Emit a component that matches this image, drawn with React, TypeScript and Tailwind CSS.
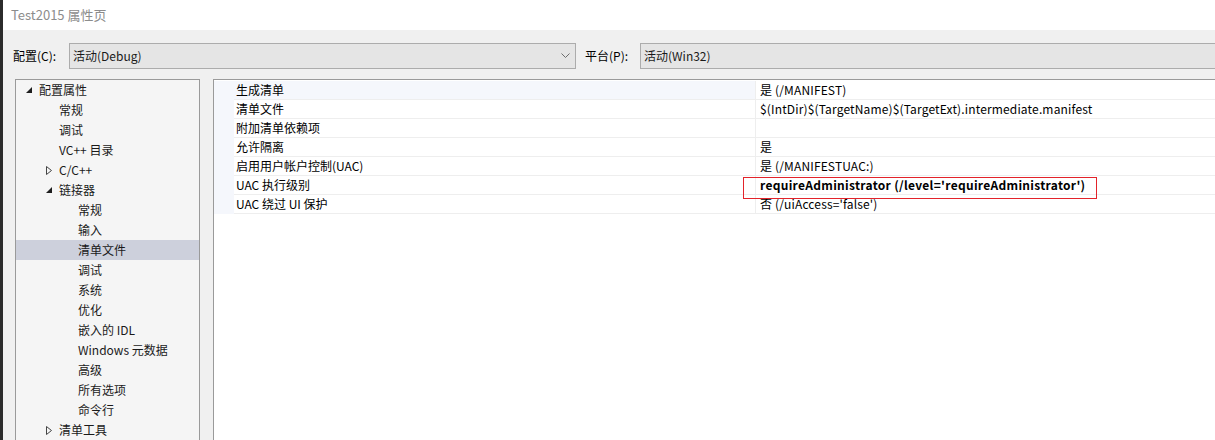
import React from 'react'

const font = { fontFamily: '"Noto Sans CJK SC", "Microsoft YaHei", sans-serif' }

type Node = { label: string; level: number; toggle?: 'open' | 'closed'; selected?: boolean }

const tree: Node[] = [
  { label: '配置属性', level: 0, toggle: 'open' },
  { label: '常规', level: 1 },
  { label: '调试', level: 1 },
  { label: 'VC++ 目录', level: 1 },
  { label: 'C/C++', level: 1, toggle: 'closed' },
  { label: '链接器', level: 1, toggle: 'open' },
  { label: '常规', level: 2 },
  { label: '输入', level: 2 },
  { label: '清单文件', level: 2, selected: true },
  { label: '调试', level: 2 },
  { label: '系统', level: 2 },
  { label: '优化', level: 2 },
  { label: '嵌入的 IDL', level: 2 },
  { label: 'Windows 元数据', level: 2 },
  { label: '高级', level: 2 },
  { label: '所有选项', level: 2 },
  { label: '命令行', level: 2 },
  { label: '清单工具', level: 1, toggle: 'closed' },
]

const props = [
  { name: '生成清单', value: '是 (/MANIFEST)' },
  { name: '清单文件', value: '$(IntDir)$(TargetName)$(TargetExt).intermediate.manifest' },
  { name: '附加清单依赖项', value: '' },
  { name: '允许隔离', value: '是' },
  { name: '启用用户帐户控制(UAC)', value: '是 (/MANIFESTUAC:)' },
  { name: 'UAC 执行级别', value: "requireAdministrator (/level='requireAdministrator')", bold: true },
  { name: 'UAC 绕过 UI 保护', value: "否 (/uiAccess='false')" },
]

function Toggle({ kind }: { kind: 'open' | 'closed' }) {
  if (kind === 'open') {
    return (
      <svg width="7" height="7" viewBox="0 0 7 7" className="shrink-0">
        <polygon points="6,0 6,6 0,6" fill="#1e1e1e" />
      </svg>
    )
  }
  return (
    <svg width="6" height="9" viewBox="0 0 6 9" className="shrink-0">
      <polygon points="0.5,0.5 5.5,4.5 0.5,8.5" fill="none" stroke="#444" strokeWidth="1" />
    </svg>
  )
}

function Dropdown({ text, chevron, className }: { text: string; chevron?: boolean; className: string }) {
  return (
    <div className={`h-[26px] border border-[#acacac] bg-[#e5e5e5] flex items-center pl-[3px] pr-[5px] ${className}`}>
      <span className="flex-1 text-[12px] text-[#1a1a1a]">{text}</span>
      {chevron && (
        <svg width="9" height="6" viewBox="0 0 9 6">
          <polyline points="0.5,0.5 4.5,4.5 8.5,0.5" fill="none" stroke="#6d6d6d" strokeWidth="1" />
        </svg>
      )}
    </div>
  )
}

export default function App() {
  return (
    <div className="w-[1215px] h-[440px] flex overflow-hidden" style={font}>
      <div className="w-[3px] bg-[#2b2b2b]" />
      <div className="flex-1 flex flex-col bg-[#f0f0f0] min-w-0">
        <div className="h-[30px] bg-white flex items-center pl-[8px] text-[13px] text-[#8c8c8c]">
          Test2015 属性页
        </div>

        <div className="mt-[13px] flex items-center">
          <span className="w-[66px] pl-[10px] text-[12px] text-black">配置(C):</span>
          <Dropdown text="活动(Debug)" chevron className="w-[507px]" />
          <span className="w-[64px] pl-[9px] text-[12px] text-black">平台(P):</span>
          <Dropdown text="活动(Win32)" className="flex-1 border-r-0" />
        </div>

        <div className="mt-[10px] flex flex-1 min-h-0">
          <div className="ml-[12px] w-[185px] border border-b-0 border-[#9a9a9a] bg-[#f5f5f5] flex flex-col text-[12px] text-[#1a1a1a]">
            {tree.map((n, i) => (
              <div
                key={i}
                className={`h-[20px] flex items-center shrink-0 ${n.selected ? 'bg-[#cdd0dc]' : ''}`}
              >
                <div
                  className={
                    n.level === 0 ? 'w-[23px] pl-[10px] flex' : n.level === 1 ? 'w-[43px] pl-[30px] flex' : 'w-[62px]'
                  }
                >
                  {n.toggle && <Toggle kind={n.toggle} />}
                </div>
                <span>{n.label}</span>
              </div>
            ))}
          </div>

          <div className="ml-[13px] flex-1 border-t border-l border-[#9a9a9a] bg-white flex flex-col pt-[1px] min-w-0 text-[12px] text-black">
            {props.map((p, i) => (
              <div key={i} className="h-[19px] flex">
                <div className="w-[20px] bg-[#f5f7fc]" />
                <div className="flex-1 flex border-b border-[#eeeeee]">
                  <div
                    className={`w-[522px] pl-[2px] flex items-center border-r border-[#eeeeee] ${i === 0 ? 'bg-[#f5f7fc]' : ''}`}
                  >
                    {p.name}
                  </div>
                  <div className="relative flex-1 pl-[4px] flex items-center tracking-[0.15px]">
                    <span className={p.bold ? 'font-bold tracking-[0.3px]' : ''}>{p.value}</span>
                    {p.bold && (
                      <div className="absolute left-[-13px] top-[1px] w-[354px] h-[22px] border border-[#e3232a]" />
                    )}
                  </div>
                </div>
              </div>
            ))}
          </div>
        </div>
      </div>
    </div>
  )
}
